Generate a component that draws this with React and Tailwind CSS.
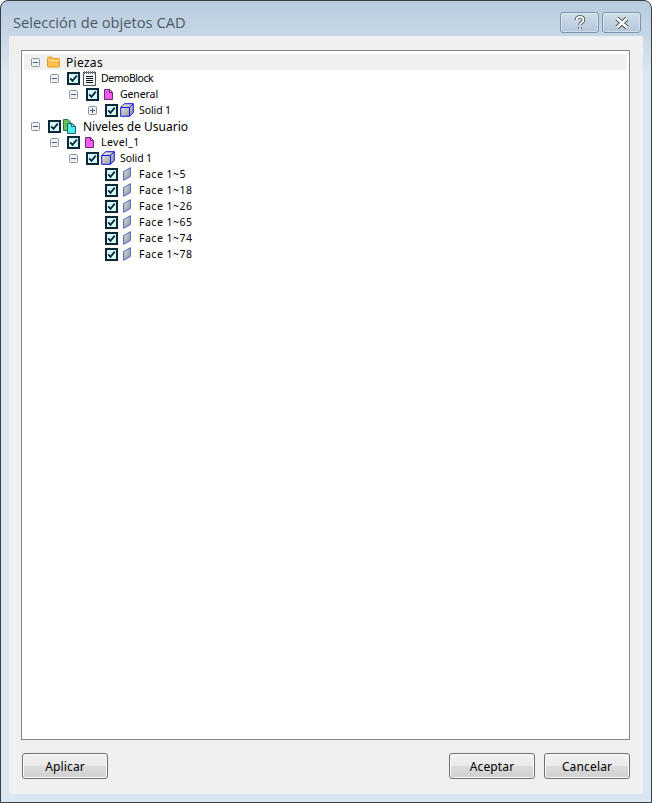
import React from "react";

const rows = [
  { indent: "pl-[7px]", exp: "minus", icon: "folder", label: "Piezas", big: true, selected: true, noCheck: true, slot: "w-[26px]", track: "tracking-[0.3px]" },
  { indent: "pl-[26px]", exp: "minus", icon: "notes", label: "DemoBlock", slot: "w-[21px]", track: "tracking-[-0.45px]" },
  { indent: "pl-[45px]", exp: "minus", icon: "page", label: "General", slot: "w-[21px]", track: "tracking-[-0.1px]" },
  { indent: "pl-[64px]", exp: "plus", icon: "cube", label: "Solid 1", slot: "w-[21px]", track: "tracking-[-0.1px]" },
  { indent: "pl-[7px]", exp: "minus", icon: "pages", label: "Niveles de Usuario", big: true, slot: "w-[22px]" },
  { indent: "pl-[26px]", exp: "minus", icon: "page", label: "Level_1", slot: "w-[21px]", track: "tracking-[0.4px]" },
  { indent: "pl-[45px]", exp: "minus", icon: "cube", label: "Solid 1", slot: "w-[21px]", track: "tracking-[-0.1px]" },
  { indent: "pl-[81px]", icon: "face", label: "Face 1~5", slot: "w-[21px]", track: "tracking-[0.5px]" },
  { indent: "pl-[81px]", icon: "face", label: "Face 1~18", slot: "w-[21px]", track: "tracking-[0.5px]" },
  { indent: "pl-[81px]", icon: "face", label: "Face 1~26", slot: "w-[21px]", track: "tracking-[0.5px]" },
  { indent: "pl-[81px]", icon: "face", label: "Face 1~65", slot: "w-[21px]", track: "tracking-[0.5px]" },
  { indent: "pl-[81px]", icon: "face", label: "Face 1~74", slot: "w-[21px]", track: "tracking-[0.5px]" },
  { indent: "pl-[81px]", icon: "face", label: "Face 1~78", slot: "w-[21px]", track: "tracking-[0.5px]" },
];

const iconOffset = {
  folder: "ml-[7px]",
  notes: "ml-[3px]",
  page: "ml-[5px]",
  pages: "ml-[2px]",
  cube: "ml-[2px]",
  face: "ml-[5px]",
};

const Expander = ({ type }) => (
  <svg width="9" height="9" viewBox="0 0 9 9" className="shrink-0">
    <rect x="0.5" y="0.5" width="8" height="8" rx="1" fill="#eef1f5" stroke="#8e949c" />
    <path d="M2 4.500h5" stroke="#4a5a78" />
    {type === "plus" && <path d="M4.500 2v5" stroke="#4a5a78" />}
  </svg>
);

const CheckBox = () => (
  <svg width="13" height="13" viewBox="0 0 13 13" className="shrink-0">
    <rect x="1" y="1" width="11" height="11" fill="#d4fbfb" stroke="#0c2836" strokeWidth="2" />
    <path d="M3.200 6.300 5.500 8.800 9.800 3.600" fill="none" stroke="#0c2836" strokeWidth="1.800" />
  </svg>
);

const TreeIcon = ({ name }) => {
  if (name === "folder") {
    return (
      <svg width="13" height="12" viewBox="0 0 13 12" className="block">
        <path d="M.5 2.500q0-1.500 1.500-1.500h3l1 1.500h5.500q1 0 1 1v6.500q0 1-1 1H1.500q-1 0-1-1z" fill="#fdc04e" stroke="#e79a22" />
        <path d="M1.500 4.500h10" stroke="#ffe3a6" />
      </svg>
    );
  }
  if (name === "notes") {
    return (
      <svg width="13" height="15" viewBox="0 0 13 15" className="block">
        <rect x="0.500" y="1.500" width="12" height="13" fill="#eefafa" stroke="#50555a" />
        <path d="M1.500 0v3M3.500 0v3M5.500 0v3M7.500 0v3M9.500 0v3M11.500 0v3" stroke="#777c80" />
        <path d="M3 5.500h7M3 7.500h7M3 9.500h7M3 11.500h7" stroke="#111" />
      </svg>
    );
  }
  if (name === "page") {
    return (
      <svg width="9" height="11" viewBox="0 0 9 11" className="block">
        <path d="M.5.500h5l3 3v7h-8z" fill="#f45cf0" stroke="#6a2a70" />
        <path d="M5.500.500v3h3z" fill="#fbd0f5" stroke="#6a2a70" />
      </svg>
    );
  }
  if (name === "pages") {
    return (
      <svg width="13" height="15" viewBox="0 0 13 15" className="block">
        <path d="M.5.500h4.500l2.500 2.500v8.500h-7z" fill="#66c05e" stroke="#2c7a2c" />
        <path d="M4.500 4.500h4.500l3.500 3v7h-8z" fill="#52eaea" stroke="#146a70" />
        <path d="M8.500 4.500v3h4z" fill="#d0fbfb" stroke="#146a70" />
      </svg>
    );
  }
  if (name === "cube") {
    return (
      <svg width="14" height="14" viewBox="0 0 14 14" className="block">
        <defs>
          <linearGradient id="cubeFront" x1="0" y1="0" x2="1" y2="1">
            <stop offset="0" stopColor="#f0f0f0" />
            <stop offset="1" stopColor="#8c8c8c" />
          </linearGradient>
        </defs>
        <path d="M.7 4.500 4.500.700h8.800v8.800l-3.800 3.800H.7z" fill="url(#cubeFront)" stroke="#1414e6" />
        <path d="M.7 4.500h8.800v8.800M9.500 4.500l3.800-3.800" fill="none" stroke="#1414e6" />
      </svg>
    );
  }
  return (
    <svg width="8" height="14" viewBox="0 0 8 14" className="block">
      <defs>
        <linearGradient id="faceFill" x1="0" y1="0" x2="1" y2="1">
          <stop offset="0" stopColor="#dcdcdc" />
          <stop offset="1" stopColor="#929292" />
        </linearGradient>
      </defs>
      <path d="M.6 4.500 7.400.700v8.800L.6 13.300z" fill="url(#faceFill)" stroke="#4a66cc" />
    </svg>
  );
};

const TreeRow = ({ row }) => (
  <div className={`flex h-4 items-center ${row.indent} ${row.selected ? "bg-[#f0f0f0]" : ""}`}>
    {row.exp ? <Expander type={row.exp} /> : null}
    {!row.noCheck && (
      <span className={row.exp ? "ml-[8px] flex" : "flex"}>
        <CheckBox />
      </span>
    )}
    <span className={`flex shrink-0 items-center ${row.slot}`}>
      <span className={iconOffset[row.icon]}>
        <TreeIcon name={row.icon} />
      </span>
    </span>
    <span
      className={`whitespace-nowrap pt-[1px] font-['Noto_Sans',sans-serif] leading-[15px] text-black ${
        row.big ? "text-[12px]" : "text-[10.5px]"
      } ${row.track || ""}`}
    >
      {row.label}
    </span>
  </div>
);

const CaptionButton = ({ children }) => (
  <div className="flex h-[21px] w-[39px] items-center justify-center rounded-[3px] border border-[#7f94ad] bg-gradient-to-b from-[#cfdde9] to-[#b4c8dc] shadow-[inset_0_0_0_1px_rgba(255,255,255,0.35)]">
    {children}
  </div>
);

const DialogButton = ({ children, className = "" }) => (
  <button
    className={`h-[26px] w-[86px] rounded-[3px] border border-[#707070] bg-[linear-gradient(#f2f2f2_0%,#ebebeb_48%,#dddddd_50%,#cfcfcf_100%)] pt-[1px] font-['Noto_Sans',sans-serif] text-[12px] tracking-[0.15px] text-black shadow-[inset_0_0_0_1px_#fafafa] ${className}`}
  >
    {children}
  </button>
);

export default function App() {
  return (
    <div className="flex h-[803px] w-[652px] flex-col rounded-t-[8px] border border-[#3c3f42] bg-[linear-gradient(#b8cbdd_0px,#c4d6e6_30px,#d9e6f3_70px,#d9e6f3_100%)] font-['DejaVu_Sans',sans-serif]">
      {/* Title bar */}
      <div className="flex h-[35px] shrink-0 items-start justify-between pl-[12px] pr-[10px]">
        <span className="mt-[10px] font-['Open_Sans',sans-serif] text-[14.7px] leading-[22px] text-[#4c5965]">
          Selección de objetos CAD
        </span>
        <div className="mt-[11px] flex gap-[3px]">
          <CaptionButton>
            <svg width="12" height="16" viewBox="0 0 12 16">
              <path d="M2.500 5Q2.500 2 6 2T9.500 5Q9.500 6.500 7.800 7.500T6 10M6 12.300v1.700" fill="none" stroke="#474c52" strokeWidth="3.600" />
              <path d="M2.500 5Q2.500 2 6 2T9.500 5Q9.500 6.500 7.800 7.500T6 10M6 12.300v1.700" fill="none" stroke="#fff" strokeWidth="1.800" />
            </svg>
          </CaptionButton>
          <CaptionButton>
            <svg width="16" height="14" viewBox="0 0 16 14">
              <path d="M3 2.500l10 9M13 2.500l-10 9" fill="none" stroke="#474c52" strokeWidth="4.400" />
              <path d="M3 2.500l10 9M13 2.500l-10 9" fill="none" stroke="#fff" strokeWidth="2.600" />
            </svg>
          </CaptionButton>
        </div>
      </div>

      {/* Client area */}
      <div className="mx-[8px] mb-[8px] flex flex-1 flex-col bg-[#f0f0f0] pb-[15px] pl-[12px] pr-[13px] pt-[14px]">
        <div className="min-h-0 flex-1 border border-[#82878d] bg-white px-[2px] pt-[3px]">
          {rows.map((row) => (
            <TreeRow key={row.label + row.indent} row={row} />
          ))}
        </div>
        <div className="mt-[13px] flex items-center pl-[1px]">
          <DialogButton>Aplicar</DialogButton>
          <div className="flex-1" />
          <DialogButton>Aceptar</DialogButton>
          <DialogButton className="ml-[9px]">Cancelar</DialogButton>
        </div>
      </div>
    </div>
  );
}
